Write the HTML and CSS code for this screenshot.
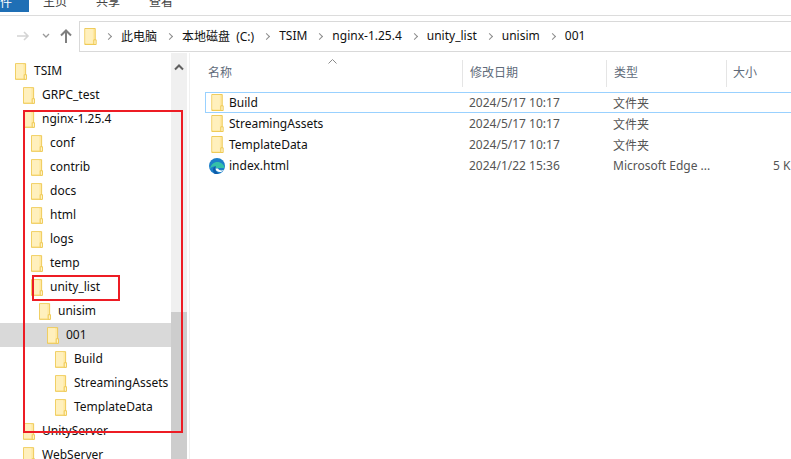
FILE: index.html
```html
<!DOCTYPE html>
<html lang="zh-CN">
<head>
<meta charset="utf-8">
<title>001</title>
<link rel="stylesheet" href="styles.css">
</head>
<body>
<svg class="defs" width="0" height="0" aria-hidden="true">
  <symbol id="folder" viewBox="0 0 13 18">
    <path d="M.5.5H11.5V17.5H.5Z" fill="#ffe9a3" stroke="#eec84f"/>
    <path d="M1 1H9V16H1Z" fill="#fff0bd"/>
    <path d="M10 12.5H12.5V17.5H10Z" fill="#fff3c8" stroke="#eec84f"/>
  </symbol>
</svg>
<div class="window">
  <nav class="ribbon">
    <span class="tab tab-file">文件</span>
    <span class="tab tab-home">主页</span>
    <span class="tab tab-share">共享</span>
    <span class="tab tab-view">查看</span>
  </nav>
  <div class="toolbar">
    <div class="nav-buttons">
      <svg class="nav-icon back" width="14" height="12" viewBox="0 0 14 12"><path d="M1 6H12M8 2l4 4-4 4" fill="none" stroke="#d4d4d4" stroke-width="1.6"/></svg>
      <svg class="nav-icon down" width="8" height="6" viewBox="0 0 8 6"><path d="M1 1l3 3 3-3" fill="none" stroke="#9a9a9a" stroke-width="1.3"/></svg>
      <svg class="nav-icon up" width="12" height="14" viewBox="0 0 12 14"><path d="M6 14V2M1 6.500l5-5 5 5" fill="none" stroke="#7f7f7f" stroke-width="2"/></svg>
    </div>
    <div class="address">
      <svg class="addr-folder" width="13" height="17"><use href="#folder"/></svg>
      <span class="chev"></span><span class="crumb">此电脑</span>
      <span class="chev"></span><span class="crumb crumb-drive">本地磁盘 (C:)</span>
      <span class="chev"></span><span class="crumb">TSIM</span>
      <span class="chev"></span><span class="crumb">nginx-1.25.4</span>
      <span class="chev"></span><span class="crumb">unity_list</span>
      <span class="chev"></span><span class="crumb">unisim</span>
      <span class="chev"></span><span class="crumb">001</span>
    </div>
  </div>
  <div class="content">
    <aside class="tree">
      <ul class="tree-list">
        <li class="node lv0"><svg class="fi" width="12" height="17"><use href="#folder"/></svg>TSIM</li>
        <li class="node lv1"><svg class="fi" width="12" height="17"><use href="#folder"/></svg>GRPC_test</li>
        <li class="node lv1"><svg class="fi" width="12" height="17"><use href="#folder"/></svg>nginx-1.25.4</li>
        <li class="node lv2"><svg class="fi" width="12" height="17"><use href="#folder"/></svg>conf</li>
        <li class="node lv2"><svg class="fi" width="12" height="17"><use href="#folder"/></svg>contrib</li>
        <li class="node lv2"><svg class="fi" width="12" height="17"><use href="#folder"/></svg>docs</li>
        <li class="node lv2"><svg class="fi" width="12" height="17"><use href="#folder"/></svg>html</li>
        <li class="node lv2"><svg class="fi" width="12" height="17"><use href="#folder"/></svg>logs</li>
        <li class="node lv2"><svg class="fi" width="12" height="17"><use href="#folder"/></svg>temp</li>
        <li class="node lv2"><svg class="fi" width="12" height="17"><use href="#folder"/></svg>unity_list</li>
        <li class="node lv3"><svg class="fi" width="12" height="17"><use href="#folder"/></svg>unisim</li>
        <li class="node lv4 current"><svg class="fi" width="12" height="17"><use href="#folder"/></svg>001</li>
        <li class="node lv5"><svg class="fi" width="12" height="17"><use href="#folder"/></svg>Build</li>
        <li class="node lv5"><svg class="fi" width="12" height="17"><use href="#folder"/></svg>StreamingAssets</li>
        <li class="node lv5"><svg class="fi" width="12" height="17"><use href="#folder"/></svg>TemplateData</li>
        <li class="node lv1"><svg class="fi" width="12" height="17"><use href="#folder"/></svg>UnityServer</li>
        <li class="node lv1"><svg class="fi" width="12" height="17"><use href="#folder"/></svg>WebServer</li>
      </ul>
      <div class="scrollbar">
        <svg class="scroll-up" width="10" height="7" viewBox="0 0 10 7"><path d="M1 5.500l4-4 4 4" fill="none" stroke="#606060" stroke-width="2"/></svg>
        <div class="thumb"></div>
      </div>
    </aside>
    <main class="files">
      <svg class="sort" width="9" height="5" viewBox="0 0 9 5"><path d="M.5 4.500l4-4 4 4" fill="none" stroke="#8a8a8a"/></svg>
      <div class="head">
        <span class="col-name">名称</span>
        <span class="col-date">修改日期</span>
        <span class="col-type">类型</span>
        <span class="col-size">大小</span>
      </div>
      <div class="row selected">
        <span class="col-name"><svg class="fi" width="13" height="17"><use href="#folder"/></svg>Build</span>
        <span class="col-date">2024/5/17 10:17</span><span class="col-type">文件夹</span><span class="col-size"></span>
      </div>
      <div class="row">
        <span class="col-name"><svg class="fi" width="13" height="17"><use href="#folder"/></svg>StreamingAssets</span>
        <span class="col-date">2024/5/17 10:17</span><span class="col-type">文件夹</span><span class="col-size"></span>
      </div>
      <div class="row">
        <span class="col-name"><svg class="fi" width="13" height="17"><use href="#folder"/></svg>TemplateData</span>
        <span class="col-date">2024/5/17 10:17</span><span class="col-type">文件夹</span><span class="col-size"></span>
      </div>
      <div class="row">
        <span class="col-name"><svg class="fi edge" width="16" height="16" viewBox="0 0 16 16">
          <circle cx="8" cy="8" r="8" fill="#1b7fc9"/>
          <path d="M1 11C2 5 7 3 11 4.500C14 5.500 15.500 8 15.500 10H7C6 8 3.500 8 1 11Z" fill="#35c1a8"/>
          <path d="M6.500 10.500C6.500 13 9 14.500 12 14C13 13.500 14 13 15 12C13 13 9.500 12.500 9 10.500Z" fill="#fff"/>
          <path d="M5.500 15.700C3 12 4 8.500 7 8C5.500 10 6 14 10 15.500C8.500 16.200 7 16 5.500 15.700Z" fill="#0f5ca8"/>
        </svg>index.html</span>
        <span class="col-date">2024/1/22 15:36</span><span class="col-type">Microsoft Edge ...</span><span class="col-size size-value">5 KB</span>
      </div>
    </main>
  </div>
  <div class="mark mark-outer"></div>
  <div class="mark mark-inner"></div>
</div>
</body>
</html>
```
FILE: styles.css
```css
* { box-sizing: border-box; }
html, body { margin: 0; padding: 0; }
body {
  width: 791px;
  height: 459px;
  overflow: hidden;
  background: #fff;
  font-family: "Noto Sans", "Noto Sans CJK SC", sans-serif;
  font-size: 12px;
  color: #111;
}
.defs { position: absolute; }
.window { position: relative; width: 791px; height: 459px; overflow: hidden; }

.ribbon {
  display: flex;
  height: 16px;
  border-bottom: 1px solid #dcdcdc;
  overflow: hidden;
  color: #444;
}
.tab { display: block; height: 12px; line-height: 12px; margin-top: -4px; box-sizing: content-box; padding-top: 0; }
.tab-file { width: 29px; height: 18px; margin-top: -6px; background: #1f6fb5; color: #fff; line-height: 18px; text-indent: -12px; white-space: nowrap; overflow: hidden; }
.tab-home { margin-left: 14px; }
.tab-share { margin-left: 29px; }
.tab-view { margin-left: 29px; }

.toolbar { display: flex; height: 37px; padding-top: 5px; }
.nav-buttons { width: 79px; height: 30px; display: flex; align-items: center; padding-left: 16px; }
.back { margin-right: 12px; }
.down { margin-right: 10px; }
.address {
  flex: 1;
  height: 31px;
  border: 1px solid #d9d9d9;
  border-right: 0;
  display: flex;
  align-items: center;
  padding: 0 0 2px 4px;
  white-space: nowrap;
  color: #111;
}
.addr-folder { flex: none; margin: 2px 9px 0 0; }
.chev {
  width: 5px;
  height: 5px;
  border-top: 1.500px solid #8c8c8c;
  border-right: 1.500px solid #8c8c8c;
  transform: rotate(45deg);
  margin: 2px 10px 0 0;
  flex: none;
}
.crumb { margin-right: 10px; }
.crumb-drive { word-spacing: 3px; }

.content { display: flex; height: 406px; }

.tree { width: 187px; display: flex; flex: none; }
.tree-list { list-style: none; margin: 0; padding: 6px 0 0; width: 171px; overflow: hidden; }
.node { display: flex; align-items: center; height: 24px; padding-bottom: 2px; white-space: nowrap; color: #111; }
.node .fi { flex: none; margin: 2px 7px 0 0; }
.lv0 { padding-left: 15px; }
.lv1 { padding-left: 23px; }
.lv2 { padding-left: 31px; }
.lv3 { padding-left: 39px; }
.lv4 { padding-left: 47px; }
.lv5 { padding-left: 55px; }
.current { background: #d9d9d9; }

.scrollbar { width: 16px; background: #f0f0f0; display: flex; flex-direction: column; align-items: center; padding-top: 11px; }
.scroll-up { flex: none; }
.thumb { width: 16px; margin-top: 241px; flex: 1; background: #cdcdcd; }

.files { position: relative; flex: 1; padding-left: 16px; border-left: 1px solid #f0f0f0; margin-left: 2px; }
.sort { position: absolute; left: 138px; top: 6px; }
.head { display: flex; height: 28px; margin-top: 6px; margin-bottom: 5px; color: #5f6b7a; align-items: center; }
.head .col-date, .head .col-type, .head .col-size { border-left: 1px solid #e5e5e5; height: 27px; line-height: 25px; }
.head .col-size { padding-left: 6px; }
.row { display: flex; height: 21px; align-items: center; white-space: nowrap; border: 1px solid transparent; border-width: 1px 0 1px 1px; margin-left: -1px; color: #555; }
.head .col-name { color: #5f6b7a; padding: 0 0 2px 2px; }
.selected { border-color: #99d1ff; }
.col-name { width: 256px; display: flex; align-items: center; color: #111; padding-left: 5px; flex: none; }
.col-name .fi { flex: none; margin-right: 5px; }
.col-name .edge { margin-left: -2px; margin-right: 4px; }
.col-date { width: 144px; padding-left: 7px; flex: none; }
.col-type { width: 120px; padding-left: 7px; flex: none; }
.col-size { flex: 1; padding-left: 7px; }
.row .size-value { padding-left: 47px; }

.mark { position: absolute; border: 2px solid #ed1c24; pointer-events: none; }
.mark-outer { left: 23px; top: 110px; width: 160px; height: 323px; }
.mark-inner { left: 32px; top: 275px; width: 88px; height: 26px; }
```
